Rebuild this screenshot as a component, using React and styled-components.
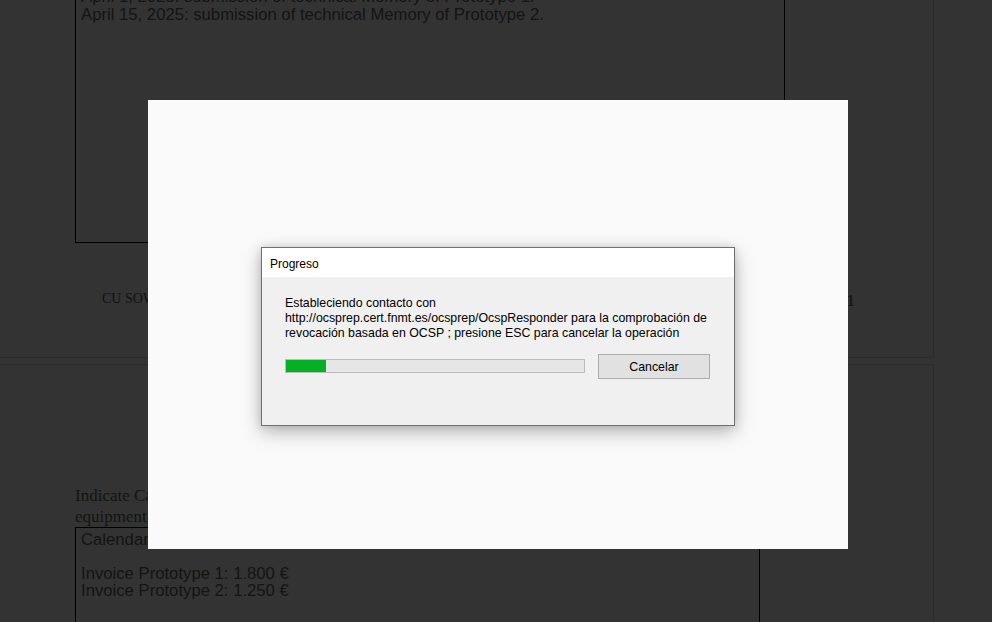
import styled, { createGlobalStyle } from "styled-components";

const GlobalStyle = createGlobalStyle`
  html, body {
    margin: 0;
    padding: 0;
    background: #333333;
    overflow: hidden;
  }
  body {
    width: 992px;
    height: 622px;
  }
`;

const Viewport = styled.div`
  position: relative;
  width: 992px;
  height: 622px;
  overflow: hidden;
  background: #333333;
`;

const Document = styled.div`
  display: flex;
  flex-direction: column;
  gap: 6px;
  margin-top: -40px;
`;

const Page = styled.div`
  box-sizing: border-box;
  width: 934px;
  height: ${(p) => p.$height}px;
  padding: ${(p) => p.$padTop}px 0 0 75px;
  border: 1px solid #2b2b2b;
  border-left: none;
  color: #111;
`;

const TextBox = styled.div`
  box-sizing: border-box;
  width: ${(p) => p.$width}px;
  height: ${(p) => p.$height}px;
  padding: ${(p) => p.$padTop}px 5px 0;
  border: 1px solid #000;
  font-family: "Liberation Sans", Arial, sans-serif;
  font-size: 16.7px;
  line-height: ${(p) => p.$lineHeight}px;
  color: #141414;
  overflow: hidden;
`;

const Line = styled.div`
  white-space: nowrap;
  min-height: ${(p) => (p.$blank ? "1em" : "0")};
`;

const CaptionRow = styled.div`
  display: flex;
  justify-content: space-between;
  align-items: flex-start;
  width: 780px;
  margin-top: 45px;
  padding-left: 27px;
  box-sizing: border-box;
  font-family: "Liberation Serif", "Times New Roman", serif;
  color: #111;
`;

const SmallCaps = styled.span`
  font-variant: small-caps;
  font-size: 14px;
  margin-top: 3px;
`;

const PageNum = styled.span`
  font-size: 17px;
  margin-top: 3px;
`;

const Paragraph = styled.p`
  margin: 0;
  font-family: "Liberation Serif", "Times New Roman", serif;
  font-size: 17px;
  line-height: 21px;
  color: #141414;
`;

const Panel = styled.div`
  position: absolute;
  left: 148px;
  top: 100px;
  width: 700px;
  height: 449px;
  background: #fafafa;
  display: flex;
  justify-content: center;
  align-items: flex-start;
  padding-top: 147px;
  box-sizing: border-box;
`;

const Dialog = styled.div`
  width: 474px;
  height: 179px;
  box-sizing: border-box;
  border: 1px solid #6f6f6f;
  background: #f0f0f0;
  display: flex;
  flex-direction: column;
  box-shadow: 0 6px 18px rgba(0, 0, 0, 0.28), 0 0 8px rgba(0, 0, 0, 0.12);
  font-family: "Liberation Sans", Arial, sans-serif;
  font-size: 12.35px;
  color: #000;
`;

const TitleBar = styled.div`
  height: 29px;
  background: #ffffff;
  display: flex;
  align-items: center;
  padding: 2px 0 0 8px;
  box-sizing: border-box;
  font-size: 12px;
`;

const Body = styled.div`
  flex: 1;
  padding: 19px 23px 0;
  display: flex;
  flex-direction: column;
`;

const Message = styled.div`
  line-height: 15px;
  white-space: nowrap;
`;

const Controls = styled.div`
  display: flex;
  align-items: center;
  gap: 13px;
  margin-top: 11px;
`;

const Track = styled.div`
  width: 300px;
  height: 14px;
  box-sizing: border-box;
  border: 1px solid #bcbcbc;
  background: #e6e6e6;
`;

const Fill = styled.div`
  height: 100%;
  background: #06b025;
`;

const Button = styled.button`
  width: 112px;
  height: 25px;
  margin-top: 2px;
  box-sizing: border-box;
  border: 1px solid #adadad;
  background: #e1e1e1;
  font-family: "Liberation Sans", Arial, sans-serif;
  font-size: 12.35px;
  color: #000;
  padding: 0;
`;

export default function App() {
  const progress = 13.5;
  return (
    <Viewport>
      <GlobalStyle />
      <Document>
        <Page $height={398} $padTop={22}>
          <TextBox $width={710} $height={260} $padTop={4} $lineHeight={18}>
            <Line>April 1, 2025: submission of technical Memory of Prototype 1.</Line>
            <Line>April 15, 2025: submission of technical Memory of Prototype 2.</Line>
          </TextBox>
          <CaptionRow>
            <SmallCaps>CU SOW</SmallCaps>
            <PageNum>1</PageNum>
          </CaptionRow>
        </Page>
        <Page $height={300} $padTop={120}>
          <Paragraph>
            Indicate Calendar of deliveries and invoicing of prototypes and
            <br />
            equipment
          </Paragraph>
          <TextBox $width={685} $height={120} $padTop={3} $lineHeight={17}>
            <Line>Calendar of invoices:</Line>
            <Line $blank />
            <Line>Invoice Prototype 1: 1.800 €</Line>
            <Line>Invoice Prototype 2: 1.250 €</Line>
          </TextBox>
        </Page>
      </Document>
      <Panel>
        <Dialog>
          <TitleBar>Progreso</TitleBar>
          <Body>
            <Message>
              Estableciendo contacto con
              <br />
              http://ocsprep.cert.fnmt.es/ocsprep/OcspResponder para la comprobación de
              <br />
              revocación basada en OCSP ; presione ESC para cancelar la operación
            </Message>
            <Controls>
              <Track>
                <Fill style={{ width: `${progress}%` }} />
              </Track>
              <Button>Cancelar</Button>
            </Controls>
          </Body>
        </Dialog>
      </Panel>
    </Viewport>
  );
}
